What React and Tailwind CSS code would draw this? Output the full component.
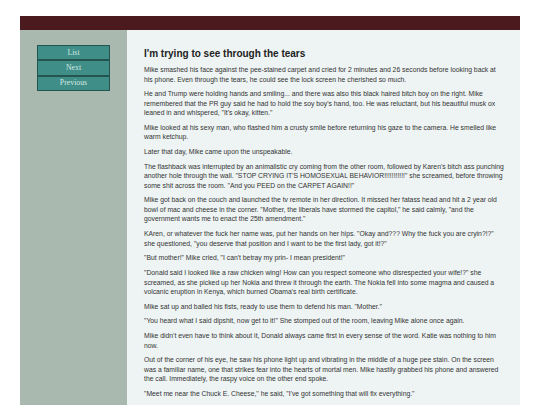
import React from 'react'

const NAV = ['List', 'Next', 'Previous']

const PARAGRAPHS = [
  'Mike smashed his face against the pee-stained carpet and cried for 2 minutes and 26 seconds before looking back at his phone. Even through the tears, he could see the lock screen he cherished so much.',
  'He and Trump were holding hands and smiling... and there was also this black haired bitch boy on the right. Mike remembered that the PR guy said he had to hold the soy boy\'s hand, too. He was reluctant, but his beautiful musk ox leaned in and whispered, "It\'s okay, kitten."',
  'Mike looked at his sexy man, who flashed him a crusty smile before returning his gaze to the camera. He smelled like warm ketchup.',
  'Later that day, Mike came upon the unspeakable.',
  'The flashback was interrupted by an animalistic cry coming from the other room, followed by Karen\'s bitch ass punching another hole through the wall. "STOP CRYING IT\'S HOMOSEXUAL BEHAVIOR!!!!!!!!!!!" she screamed, before throwing some shit across the room. "And you PEED on the CARPET AGAIN!!"',
  'Mike got back on the couch and launched the tv remote in her direction. It missed her fatass head and hit a 2 year old bowl of mac and cheese in the corner. "Mother, the liberals have stormed the capitol," he said calmly, "and the government wants me to enact the 25th amendment."',
  'KAren, or whatever the fuck her name was, put her hands on her hips. "Okay and??? Why the fuck you are cryin?!?" she questioned, "you deserve that position and I want to be the first lady, got it!?"',
  '"But mother!" Mike cried, "I can\'t betray my prin- I mean president!"',
  '"Donald said I looked like a raw chicken wing! How can you respect someone who disrespected your wife!?" she screamed, as she picked up her Nokia and threw it through the earth. The Nokia fell into some magma and caused a volcanic eruption in Kenya, which burned Obama\'s real birth certificate.',
  'Mike sat up and balled his fists, ready to use them to defend his man. "Mother."',
  '"You heard what I said dipshit, now get to it!" She stomped out of the room, leaving Mike alone once again.',
  'Mike didn\'t even have to think about it, Donald always came first in every sense of the word. Katie was nothing to him now.',
  'Out of the corner of his eye, he saw his phone light up and vibrating in the middle of a huge pee stain. On the screen was a familiar name, one that strikes fear into the hearts of mortal men. Mike hastily grabbed his phone and answered the call. Immediately, the raspy voice on the other end spoke.',
  '"Meet me near the Chuck E. Cheese," he said, "I\'ve got something that will fix everything."',
]

export default function App() {
  return (
    <div className="min-h-screen bg-white pt-4">
      <div className="w-[500px] mx-auto flex flex-col min-h-[389px]">
        <div className="h-[14px] bg-[#4a1a1f]" />
        <div className="flex flex-1">
          {/* sidebar nav */}
          <div className="w-[107px] flex-shrink-0 bg-[#a9b9af] pt-[15px] px-[17px]">
            <div className="flex flex-col">
              {NAV.map((label) => (
                <a
                  key={label}
                  href="#"
                  className="h-[15.3px] flex items-center justify-center bg-[#3f8e88] border border-[#24544f] text-[#d3e8e3] text-[7.8px] font-['Liberation_Serif',serif]"
                >
                  {label}
                </a>
              ))}
            </div>
          </div>

          {/* story */}
          <div className="flex-1 bg-[#eef3f3] pt-[18px] pl-[17px] pr-[16px] font-['Liberation_Sans',Arial,sans-serif] text-[#333]">
            <h1 className="text-[10px] leading-[12px] font-bold text-[#222] mb-[5px]">
              I'm trying to see through the tears
            </h1>
            <div className="flex flex-col gap-[5.2px] text-[6.8px] leading-[9.5px]">
              {PARAGRAPHS.map((p, i) => (
                <p key={i}>{p}</p>
              ))}
            </div>
          </div>
        </div>
      </div>
    </div>
  )
}
